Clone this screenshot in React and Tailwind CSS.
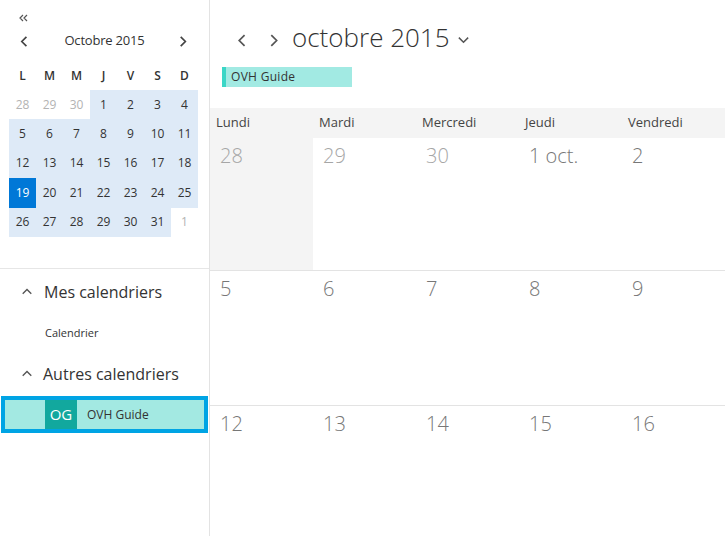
import React from "react";

const font = { fontFamily: '"Open Sans", "Noto Sans", sans-serif' };

function Chev({ dir = "left", size = 12, stroke = "#444", sw = 1.6, className = "" }) {
  const paths = {
    left: "M8 2 L3 7 L8 12",
    right: "M4 2 L9 7 L4 12",
    up: "M2 9 L7 4 L12 9",
    down: "M2 5 L7 10 L12 5",
  };
  return (
    <svg width={size} height={size} viewBox="0 0 14 14" className={className}>
      <path d={paths[dir]} fill="none" stroke={stroke} strokeWidth={sw} />
    </svg>
  );
}

const miniRows = [
  [["28", "o"], ["29", "o"], ["30", "o"], ["1"], ["2"], ["3"], ["4"]],
  [["5"], ["6"], ["7"], ["8"], ["9"], ["10"], ["11"]],
  [["12"], ["13"], ["14"], ["15"], ["16"], ["17"], ["18"]],
  [["19", "t"], ["20"], ["21"], ["22"], ["23"], ["24"], ["25"]],
  [["26"], ["27"], ["28"], ["29"], ["30"], ["31"], ["1", "o"]],
];

const weeks = [
  [
    { n: "28", cls: "text-[#a6a6a6] bg-[#f4f4f4]" },
    { n: "29", cls: "text-[#a6a6a6]" },
    { n: "30", cls: "text-[#a6a6a6]" },
    { n: "1 oct.", cls: "text-[#777]" },
    { n: "2", cls: "text-[#777]" },
  ],
  [
    { n: "5", cls: "text-[#777]" },
    { n: "6", cls: "text-[#777]" },
    { n: "7", cls: "text-[#777]" },
    { n: "8", cls: "text-[#777]" },
    { n: "9", cls: "text-[#777]" },
  ],
  [
    { n: "12", cls: "text-[#777]" },
    { n: "13", cls: "text-[#777]" },
    { n: "14", cls: "text-[#777]" },
    { n: "15", cls: "text-[#777]" },
    { n: "16", cls: "text-[#777]" },
  ],
];

const rowH = ["h-[133px]", "h-[135px]", "h-[135px]"];

export default function App() {
  return (
    <div className="flex w-[725px] h-[536px] overflow-hidden bg-white" style={font}>
      {/* Sidebar */}
      <div className="w-[210px] shrink-0 border-r border-[#e3e3e3] flex flex-col">
        <div className="h-[269px] shrink-0 border-b border-[#e6e6e6]">
          <div className="h-[30px] pl-[17px] pt-[12px]">
            <svg width="12" height="12" viewBox="0 0 12 12">
              <path d="M6 3 L3 6 L6 9 M10 3 L7 6 L10 9" fill="none" stroke="#555" strokeWidth="1.2" />
            </svg>
          </div>
          <div className="h-[22px] flex items-center justify-between pl-[19px] pr-[19px]">
            <Chev dir="left" size={13} sw={1.8} stroke="#444" />
            <span className="text-[13px] text-[#333] tracking-[-0.2px]">Octobre 2015</span>
            <Chev dir="right" size={13} sw={1.8} stroke="#444" />
          </div>
          <div className="ml-[9px] mt-[14px] w-[189px]">
            <div className="grid grid-cols-7 h-[20px] mb-[4px] items-center text-center text-[12px] font-semibold text-[#333]">
              {["L", "M", "M", "J", "V", "S", "D"].map((d, i) => (
                <span key={i}>{d}</span>
              ))}
            </div>
            {miniRows.map((row, ri) => (
              <div key={ri} className="grid grid-cols-7 h-[29.4px]">
                {row.map(([n, f], ci) => (
                  <div
                    key={ci}
                    className={
                      "flex items-center justify-center text-[12px] " +
                      (f === "o"
                        ? "text-[#b3b3b3] bg-white"
                        : f === "t"
                        ? "bg-[#0078d7] text-white"
                        : "bg-[#deeaf7] text-[#333]")
                    }
                  >
                    {n}
                  </div>
                ))}
              </div>
            ))}
          </div>
        </div>
        <div className="pt-[10px]">
          <div className="flex items-center h-[26px] pl-[21px]">
            <Chev dir="up" size={12} sw={1.6} stroke="#555" />
            <span className="ml-[11px] text-[16px] text-[#333]">Mes calendriers</span>
          </div>
          <div className="h-[26px] mt-[15px] pl-[45px] flex items-center text-[11px] text-[#333]">
            Calendrier
          </div>
          <div className="flex items-center h-[26px] mt-[15px] pl-[21px]">
            <Chev dir="up" size={12} sw={1.6} stroke="#555" />
            <span className="ml-[10px] text-[16px] text-[#333]">Autres calendriers</span>
          </div>
          <div className="mt-[9px] ml-[1px] w-[207px] h-[37px] border-[4px] border-[#00a4e4] bg-[#a3e9e2] flex items-stretch">
            <div className="w-[40px]" />
            <div className="w-[32px] bg-[#12a89e] text-white text-[15px] flex items-center justify-center">
              OG
            </div>
            <div className="pl-[10px] flex items-center text-[12px] text-[#333]">OVH Guide</div>
          </div>
        </div>
      </div>

      {/* Main */}
      <div className="flex-1 flex flex-col">
        <div className="h-[66px] shrink-0 flex items-end pl-[26px] pb-[12px]">
          <Chev dir="left" size={15} sw={1.6} stroke="#555" className="mb-[6px]" />
          <Chev dir="right" size={15} sw={1.6} stroke="#555" className="ml-[16px] mb-[6px]" />
          <span className="ml-[10px] text-[26px] leading-[34px] text-[#333] font-light">octobre 2015</span>
          <Chev dir="down" size={13} sw={1.6} stroke="#555" className="ml-[7px] mb-[8px]" />
        </div>
        <div className="pl-[12px] pt-[1px] shrink-0">
          <div className="w-[130px] h-[20px] bg-[#a2eae3] border-l-[4px] border-[#3ad6c6] flex items-center pl-[5px] text-[12px] text-[#333] tracking-[0.3px]">
            OVH Guide
          </div>
        </div>
        <div className="mt-[21px] shrink-0 h-[30px] bg-[#f4f4f4] grid grid-cols-5 items-center text-[13px] text-[#444]">
          {["Lundi", "Mardi", "Mercredi", "Jeudi", "Vendredi"].map((d) => (
            <span key={d} className="pl-[6px]">
              {d}
            </span>
          ))}
        </div>
        {weeks.map((w, wi) => (
          <div key={wi} className={"grid grid-cols-5 shrink-0 border-b border-[#e3e3e3] " + rowH[wi]}>
            {w.map((c, ci) => (
              <div key={ci} className={"pl-[10px] pt-[3px] text-[20px] font-light " + c.cls}>
                {c.n}
              </div>
            ))}
          </div>
        ))}
      </div>
    </div>
  );
}
